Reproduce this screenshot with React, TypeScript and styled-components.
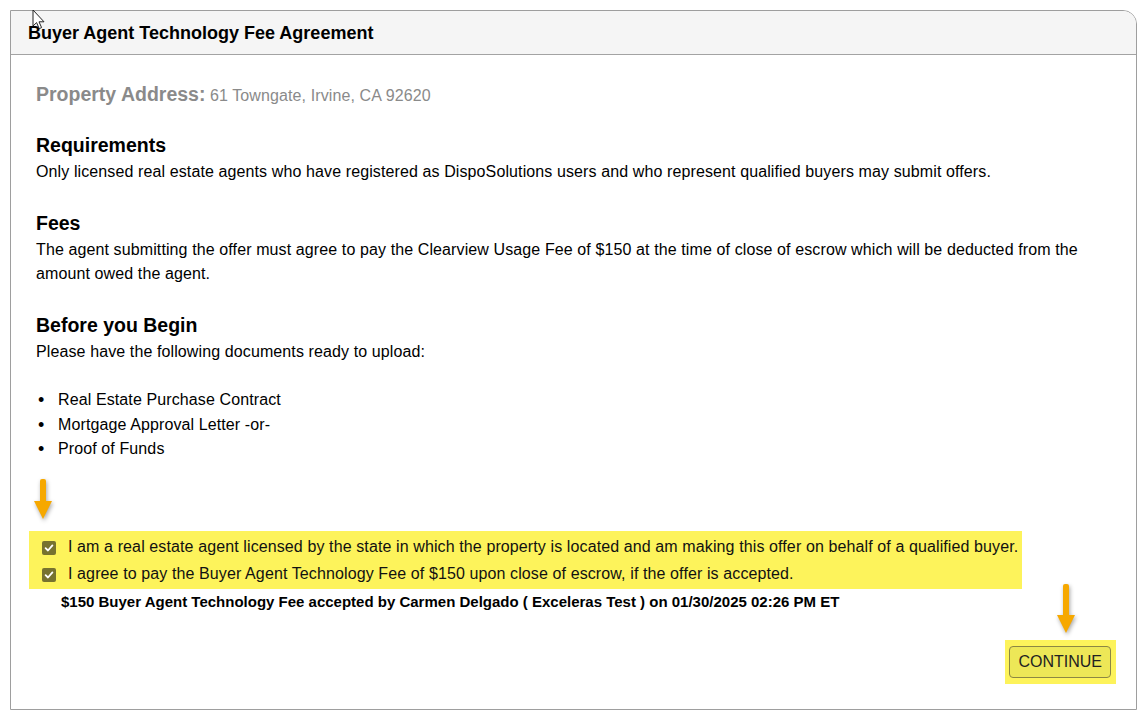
import styled, { createGlobalStyle } from "styled-components";

const GlobalStyle = createGlobalStyle`
  html, body {
    margin: 0;
    padding: 0;
    background: #fff;
  }
  body {
    padding: 10px 0 0 10px;
    font-family: "Liberation Sans", Arial, sans-serif;
    color: #000;
  }
  * {
    box-sizing: border-box;
  }
`;

const Panel = styled.div`
  width: 1127px;
  min-height: 700px;
  border: 1px solid #9e9e9e;
  border-top-right-radius: 14px;
  display: flex;
  flex-direction: column;
  overflow: hidden;
`;

const PanelHeader = styled.div`
  height: 44px;
  background: #f5f5f5;
  border-bottom: 1px solid #a3a3a3;
  display: flex;
  align-items: center;
  padding: 0 0 0 17px;
`;

const Title = styled.h1`
  margin: 0;
  font-size: 18px;
  font-weight: 700;
  padding-top: 1px;
`;

const Body = styled.div`
  flex: 1;
  display: flex;
  flex-direction: column;
  padding: 27px 25px 24px 25px;
  letter-spacing: 0.11px;
`;

const AddressRow = styled.div`
  line-height: 24px;
  color: #8a8a8a;
  font-size: 16px;
  margin-bottom: 25px;

  > b {
    font-size: 19.5px;
    font-weight: 700;
    letter-spacing: 0;
  }
`;

const Section = styled.section`
  margin-bottom: 27px;
`;

const Heading = styled.h2`
  margin: 0 0 3px;
  font-size: 19.5px;
  line-height: 24px;
  font-weight: 700;
  letter-spacing: 0;
`;

const Text = styled.p`
  margin: 0;
  font-size: 16px;
  line-height: 24px;
`;

const DocList = styled.ul`
  margin: 24px 0 0;
  padding: 0 0 0 22px;
  list-style: none;

  > li {
    position: relative;
    font-size: 16px;
    line-height: 24.5px;
  }

  > li::before {
    content: "•";
    position: absolute;
    left: -20px;
    font-size: 18px;
  }
`;

const ArrowBox = styled.div`
  width: 20px;
  height: 42px;
  margin: 17px 0 10px -3px;
`;

const Highlight = styled.div`
  align-self: flex-start;
  margin-left: -7px;
  padding: 3px 4px 1px 13px;
  background: #fdf35b;
`;

const CheckRow = styled.label`
  display: flex;
  align-items: center;
  gap: 12px;
  height: 27px;
  font-size: 16px;
  color: #111;
`;

const Box = styled.span`
  width: 14px;
  height: 14px;
  border-radius: 2px;
  background: #77722f;
  display: flex;
  align-items: center;
  justify-content: center;
  flex-shrink: 0;
  margin-top: 1px;
`;

const Accepted = styled.div`
  margin: 4px 0 0 25px;
  font-size: 15px;
  line-height: 18px;
  font-weight: 700;
  letter-spacing: 0;
`;

const Footer = styled.div`
  display: flex;
  justify-content: flex-end;
  margin: 29px -5px 0 0;
`;

const ButtonMark = styled.div`
  position: relative;
  background: #fdf35b;
  padding: 6px 5px 6px 4px;
`;

const FloatingArrow = styled.div`
  position: absolute;
  left: 51px;
  bottom: calc(100% + 6px);
  width: 20px;
  height: 50px;
`;

const Button = styled.button`
  height: 32px;
  padding: 0 8px;
  background: #ede757;
  border: 1px solid #8c8743;
  border-radius: 4px;
  font-family: "Liberation Sans", Arial, sans-serif;
  font-size: 16px;
  color: #222;
  cursor: pointer;
`;

const Cursor = styled.svg`
  position: fixed;
  left: 32px;
  top: 9px;
  pointer-events: none;
`;

function DownArrow({ length }: { length: number }) {
  const head = 18;
  return (
    <svg
      width="20"
      height={length + 4}
      viewBox={`0 0 20 ${length + 4}`}
      style={{ overflow: "visible", filter: "drop-shadow(1px 2px 2px rgba(0,0,0,0.35))" }}
    >
      <rect x="7" y="0" width="6" height={length - head + 2} rx="2" fill="#f6a800" />
      <polygon points={`1,${length - head} 19,${length - head} 10,${length}`} fill="#f6a800" />
    </svg>
  );
}

function Check() {
  return (
    <svg width="10" height="10" viewBox="0 0 10 10">
      <path d="M1.6 5.2 L4 7.5 L8.4 2.4" fill="none" stroke="#fff" strokeWidth="1.8" strokeLinecap="round" strokeLinejoin="round" />
    </svg>
  );
}

export default function App() {
  return (
    <>
      <GlobalStyle />
      <Panel>
        <PanelHeader>
          <Title>Buyer Agent Technology Fee Agreement</Title>
        </PanelHeader>
        <Body>
          <AddressRow>
            <b>Property Address:</b> 61 Towngate, Irvine, CA 92620
          </AddressRow>

          <Section>
            <Heading>Requirements</Heading>
            <Text>
              Only licensed real estate agents who have registered as DispoSolutions users and who represent qualified buyers may submit offers.
            </Text>
          </Section>

          <Section>
            <Heading>Fees</Heading>
            <Text>
              The agent submitting the offer must agree to pay the Clearview Usage Fee of $150 at the time of close of escrow which will be deducted from the amount owed the agent.
            </Text>
          </Section>

          <section>
            <Heading>Before you Begin</Heading>
            <Text>Please have the following documents ready to upload:</Text>
            <DocList>
              <li>Real Estate Purchase Contract</li>
              <li>Mortgage Approval Letter -or-</li>
              <li>Proof of Funds</li>
            </DocList>
          </section>

          <ArrowBox>
            <DownArrow length={40} />
          </ArrowBox>

          <Highlight>
            <CheckRow>
              <Box>
                <Check />
              </Box>
              I am a real estate agent licensed by the state in which the property is located and am making this offer on behalf of a qualified buyer.
            </CheckRow>
            <CheckRow>
              <Box>
                <Check />
              </Box>
              I agree to pay the Buyer Agent Technology Fee of $150 upon close of escrow, if the offer is accepted.
            </CheckRow>
          </Highlight>

          <Accepted>
            $150 Buyer Agent Technology Fee accepted by Carmen Delgado ( Exceleras Test ) on 01/30/2025 02:26 PM ET
          </Accepted>

          <Footer>
            <ButtonMark>
              <FloatingArrow>
                <DownArrow length={49} />
              </FloatingArrow>
              <Button>CONTINUE</Button>
            </ButtonMark>
          </Footer>
        </Body>
      </Panel>
      <Cursor width="14" height="22" viewBox="0 0 14 22">
        <path d="M1 1 L1 17 L4.6 13.6 L7.2 19.6 L9.6 18.6 L7 12.8 L12 12.8 Z" fill="#fff" stroke="#222" strokeWidth="1" strokeLinejoin="round" />
      </Cursor>
    </>
  );
}
